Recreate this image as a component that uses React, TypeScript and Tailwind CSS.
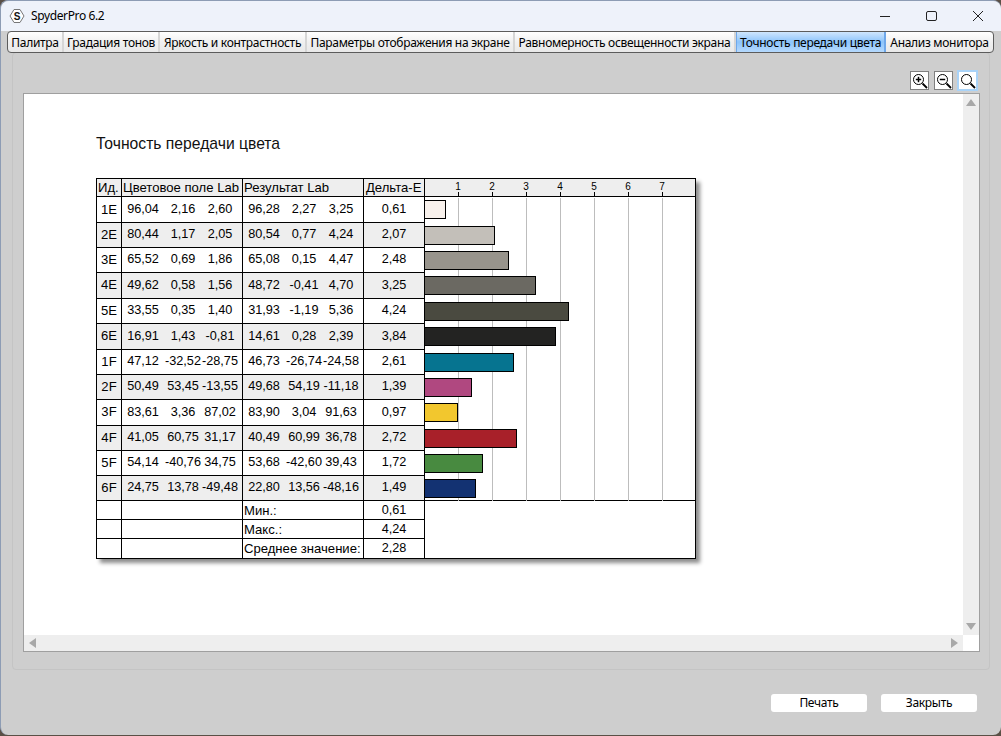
import React from "react";

const rows = [
  ["1E", ["96,04", "2,16", "2,60"], ["96,28", "2,27", "3,25"], "0,61", 0.61, "#f8f1ec", 25.5],
  ["2E", ["80,44", "1,17", "2,05"], ["80,54", "0,77", "4,24"], "2,07", 2.07, "#c3bfb9", 25],
  ["3E", ["65,52", "0,69", "1,86"], ["65,08", "0,15", "4,47"], "2,48", 2.48, "#98948c", 25],
  ["4E", ["49,62", "0,58", "1,56"], ["48,72", "-0,41", "4,70"], "3,25", 3.25, "#6b6962", 26],
  ["5E", ["33,55", "0,35", "1,40"], ["31,93", "-1,19", "5,36"], "4,24", 4.24, "#4a4a40", 25],
  ["6E", ["16,91", "1,43", "-0,81"], ["14,61", "0,28", "2,39"], "3,84", 3.84, "#232322", 26],
  ["1F", ["47,12", "-32,52", "-28,75"], ["46,73", "-26,74", "-24,58"], "2,61", 2.61, "#067490", 25],
  ["2F", ["50,49", "53,45", "-13,55"], ["49,68", "54,19", "-11,18"], "1,39", 1.39, "#b04880", 25],
  ["3F", ["83,61", "3,36", "87,02"], ["83,90", "3,04", "91,63"], "0,97", 0.97, "#f2c72e", 26],
  ["4F", ["41,05", "60,75", "31,17"], ["40,49", "60,99", "36,78"], "2,72", 2.72, "#a82029", 25],
  ["5F", ["54,14", "-40,76", "34,75"], ["53,68", "-42,60", "39,43"], "1,72", 1.72, "#488a40", 25],
  ["6F", ["24,75", "13,78", "-49,48"], ["22,80", "13,56", "-48,16"], "1,49", 1.49, "#133272", 25],
] as const;

const tabs = [
  ["Палитра", "w-[56px]"],
  ["Градация тонов", "w-[96px]"],
  ["Яркость и контрастность", "w-[147px]"],
  ["Параметры отображения на экране", "w-[208px]"],
  ["Равномерность освещенности экрана", "w-[221px]"],
  ["Точность передачи цвета", "w-[150px]"],
  ["Анализ монитора", "w-[107px]"],
];

const footer = [
  ["Мин.:", "0,61"],
  ["Макс.:", "4,24"],
  ["Среднее значение:", "2,28"],
];

function Triple({ v }: { v: readonly string[] }) {
  return (
    <div className="grid h-full grid-cols-[42px_38px_36px] items-center text-center text-[12.7px]">
      {v.map((x, i) => (
        <span key={i} className="whitespace-nowrap">{x}</span>
      ))}
    </div>
  );
}

function Lens({ kind }: { kind: "plus" | "minus" | "none" }) {
  return (
    <svg width="16" height="16" viewBox="0 0 16 16" fill="none" stroke="#000">
      <circle cx="6.5" cy="6.5" r="5" strokeWidth="1" />
      <path d="M10.5 10.5L15 15" strokeWidth="1.8" />
      {kind !== "none" && <path d="M3.8 6.5H9.2" strokeWidth="1.5" />}
      {kind === "plus" && <path d="M6.5 3.8V9.2" strokeWidth="1.5" />}
    </svg>
  );
}

export default function App() {
  return (
    <div className="h-[736px] w-[1001px] overflow-hidden bg-[#5a5046]">
      <div className="flex h-[735px] w-full flex-col rounded-[8px] border-t border-l border-[#8d9cb4] bg-[#cecece] font-['Noto_Sans',sans-serif] text-[12px] text-black">
        <div className="flex h-[30px] shrink-0 items-center rounded-t-[8px] bg-[#eef2fa]">
          <svg width="16" height="16" viewBox="0 0 16 16" className="ml-[8px]">
            <path d="M5 1.5H11L15 8L11 14.5H5L1 8Z" fill="#fff" stroke="#777" strokeWidth="1" strokeLinejoin="round" />
            <text x="8" y="11.5" textAnchor="middle" fontSize="10" fontWeight="700" fontFamily="Liberation Sans" fill="#111">S</text>
          </svg>
          <span className="ml-[6px] text-[12px] tracking-[-0.38px]">SpyderPro 6.2</span>
          <div className="ml-auto flex items-center">
            <svg width="46" height="30" viewBox="0 0 46 30" fill="none" stroke="#222">
              <path d="M17 15.5H27" />
            </svg>
            <svg width="46" height="30" viewBox="0 0 46 30" fill="none" stroke="#222">
              <rect x="17.5" y="10.5" width="10" height="9" rx="1.5" />
            </svg>
            <svg width="46" height="30" viewBox="0 0 46 30" fill="none" stroke="#222">
              <path d="M18 10L28 20M28 10L18 20" />
            </svg>
          </div>
        </div>

        <div className="relative flex min-h-0 flex-1 flex-col">
          <div className="z-10 ml-[6px] flex h-[22px] w-[987px] shrink-0 overflow-hidden rounded-[4px] border border-[#5c5c5c] bg-gradient-to-b from-[#ffffff] via-[#f0f0f0] to-[#e9e9e9]">
            {tabs.map(([t, w], i) => (
              <div
                key={t}
                className={`flex items-center justify-center whitespace-nowrap border-r-2 border-[#d6d6d6] pt-px tracking-[-0.3px] last:border-r-0 ${w} ${
                  i === 5 ? "border-r border-l border-l-[#6fa8ea] border-r-[#6fa8ea] bg-gradient-to-b from-[#cfe6fd] via-[#8cc4fb] to-[#b5d9fd]" : ""
                }`}
              >
                {t}
              </div>
            ))}
          </div>

          <div className="mx-[11px] mt-[-1px] mb-[65px] flex min-h-0 flex-1 flex-col rounded-[4px] border border-[#c4c4c4] pt-[18px] pr-[9px] pl-[10px] pb-[17px]">
            <div className="flex h-[22px] shrink-0 justify-end gap-[4px] pr-[2px]">
              <div className="flex h-[19px] w-[19px] items-center justify-center border border-[#808080] bg-white"><Lens kind="plus" /></div>
              <div className="ml-[1px] flex h-[19px] w-[19px] items-center justify-center border border-[#808080] bg-white"><Lens kind="minus" /></div>
              <div className="mt-[-1px] flex h-[21px] w-[21px] items-center justify-center border-2 border-[#a9d3f8] bg-white"><Lens kind="none" /></div>
            </div>

            <div className="flex min-h-0 flex-1 flex-col border-t border-r border-l border-[#9f9f9f] bg-white">
              <div className="flex min-h-0 flex-1">
                <div className="min-w-0 flex-1 pt-[41px] pl-[72px] font-['Liberation_Sans',sans-serif]">
                  <div className="h-[43px] text-[15.7px] leading-[17px] text-[#111]">Точность передачи цвета</div>
                  <div className="flex w-[600px] border-[1.5px] border-black shadow-[4px_4px_4px_rgba(0,0,0,0.45)]">
                    <div className="w-[328px] shrink-0 text-[13.1px] leading-none">
                      <div className="grid h-[18px] grid-cols-[25px_121px_121px_61px] items-center border-b-[1.5px] border-black bg-[#eeeeee]">
                        <div className="h-full border-r-[1.5px] border-black pl-[1px] leading-[17px]">Ид.</div>
                        <div className="h-full border-r-[1.5px] border-black pl-[1px] leading-[17px] whitespace-nowrap">Цветовое поле Lab</div>
                        <div className="h-full border-r-[1.5px] border-black pl-[1px] leading-[17px] whitespace-nowrap">Результат Lab</div>
                        <div className="h-full border-r-[1.5px] border-black pl-[2px] leading-[17px] whitespace-nowrap">Дельта-Е</div>
                      </div>
                      {rows.map((r, i) => (
                        <div
                          key={r[0]}
                          style={{ height: r[6] }}
                          className={`grid grid-cols-[25px_121px_121px_61px] items-center border-b-[1.5px] border-black ${i % 2 ? "bg-[#eeeeee]" : "bg-white"}`}
                        >
                          <div className="flex h-full items-center justify-center border-r-[1.5px] border-black">{r[0]}</div>
                          <div className="h-full border-r-[1.5px] border-black"><Triple v={r[1]} /></div>
                          <div className="h-full border-r-[1.5px] border-black"><Triple v={r[2]} /></div>
                          <div className="flex h-full items-center justify-center border-r-[1.5px] border-black text-[12.7px]">{r[3]}</div>
                        </div>
                      ))}
                      {footer.map(([a, b], i) => (
                        <div
                          key={a}
                          className={`grid h-[19px] grid-cols-[25px_121px_121px_61px] items-center border-black ${i < 2 ? "border-b-[1.5px]" : ""}`}
                        >
                          <div className="h-full border-r-[1.5px] border-black" />
                          <div className="h-full border-r-[1.5px] border-black" />
                          <div className="h-full border-r-[1.5px] border-black pl-[1px] leading-[19px] whitespace-nowrap">{a}</div>
                          <div className="h-full border-r-[1.5px] border-black text-center text-[12.7px] leading-[19px]">{b}</div>
                        </div>
                      ))}
                    </div>

                    <div className="relative min-w-0 flex-1">
                      <div className="relative h-[18px] border-b-[1.5px] border-black bg-[#eeeeee] font-['Liberation_Sans',sans-serif] text-[10px]">
                        {[1, 2, 3, 4, 5, 6, 7].map((n) => (
                          <span key={n} style={{ left: n * 34 - 11 }} className="absolute top-[2px] w-[20px] text-center leading-[11px]">{n}</span>
                        ))}
                      </div>
                      {[1, 2, 3, 4, 5, 6, 7].map((n) => (
                        <div key={n} style={{ left: n * 34 - 1 }} className="absolute top-[13px] h-[5px] w-px bg-black" />
                      ))}
                      {[1, 2, 3, 4, 5, 6, 7].map((n) => (
                        <div key={n} style={{ left: n * 34 - 1 }} className="absolute top-[19px] h-[303px] w-px bg-[#bdbdbd]" />
                      ))}
                      <div className="h-[303.5px] overflow-hidden border-b-[1.5px] border-black">
                        {rows.map((r) => (
                          <div key={r[0]} style={{ height: r[6] }} className="relative flex items-center">
                            <div style={{ width: r[4] * 34, backgroundColor: r[5] }} className="h-[19px] border-[1.5px] border-l-0 border-black" />
                          </div>
                        ))}
                      </div>
                    </div>
                  </div>
                </div>

                <div className="flex w-[16px] shrink-0 flex-col items-center justify-between bg-[#eeeeee] py-[5px]">
                  <div className="h-0 w-0 border-x-[5px] border-b-[7px] border-x-transparent border-b-[#a8a8a8]" />
                  <div className="h-0 w-0 border-x-[5px] border-t-[7px] border-x-transparent border-t-[#a8a8a8]" />
                </div>
              </div>
              <div className="flex h-[17px] shrink-0 border-b border-[#9f9f9f]">
                <div className="flex flex-1 items-center justify-between bg-[#eeeeee] px-[5px]">
                  <div className="h-0 w-0 border-y-[5px] border-r-[7px] border-y-transparent border-r-[#a8a8a8]" />
                  <div className="h-0 w-0 border-y-[5px] border-l-[7px] border-y-transparent border-l-[#a8a8a8]" />
                </div>
                <div className="w-[16px] shrink-0 bg-white" />
              </div>
            </div>
          </div>

          <div className="absolute right-[24px] bottom-[23px] flex gap-[14px] tracking-[-0.3px]">
            <div className="flex h-[18px] w-[96px] items-center justify-center rounded-[3px] bg-white">Печать</div>
            <div className="flex h-[18px] w-[96px] items-center justify-center rounded-[3px] bg-white">Закрыть</div>
          </div>
        </div>
      </div>
    </div>
  );
}
